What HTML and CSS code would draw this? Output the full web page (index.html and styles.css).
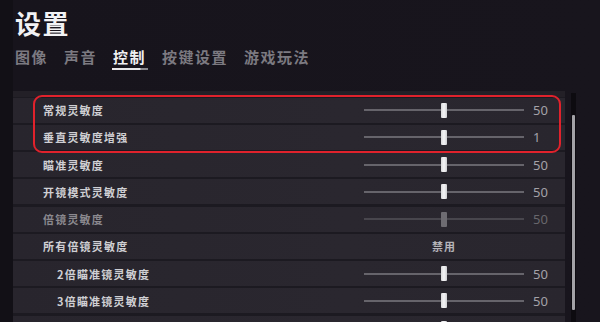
FILE: index.html
```html
<!DOCTYPE html>
<html lang="zh-CN">
<head>
<meta charset="utf-8">
<title>设置</title>
<link rel="stylesheet" href="styles.css">
</head>
<body>
<div class="screen">
  <header class="head">
    <h1 class="title">设置</h1>
    <nav class="tabs">
      <span class="tab">图像</span>
      <span class="tab">声音</span>
      <span class="tab active">控制</span>
      <span class="tab">按键设置</span>
      <span class="tab">游戏玩法</span>
    </nav>
  </header>
  <div class="content">
    <section class="panel">
      <div class="panel-top"></div>
      <div class="rows">
        <div class="row">
          <span class="label">常规灵敏度</span>
          <span class="slider"><span class="track"></span><span class="thumb"></span></span>
          <span class="value">50</span>
        </div>
        <div class="row">
          <span class="label">垂直灵敏度增强</span>
          <span class="slider"><span class="track"></span><span class="thumb"></span></span>
          <span class="value">1</span>
        </div>
        <div class="row">
          <span class="label">瞄准灵敏度</span>
          <span class="slider"><span class="track"></span><span class="thumb"></span></span>
          <span class="value">50</span>
        </div>
        <div class="row">
          <span class="label">开镜模式灵敏度</span>
          <span class="slider"><span class="track"></span><span class="thumb"></span></span>
          <span class="value">50</span>
        </div>
        <div class="row disabled">
          <span class="label">倍镜灵敏度</span>
          <span class="slider"><span class="track"></span><span class="thumb"></span></span>
          <span class="value">50</span>
        </div>
        <div class="row">
          <span class="label">所有倍镜灵敏度</span>
          <span class="slider option">禁用</span>
          <span class="value"></span>
        </div>
        <div class="row sub">
          <span class="label">2倍瞄准镜灵敏度</span>
          <span class="slider"><span class="track"></span><span class="thumb"></span></span>
          <span class="value">50</span>
        </div>
        <div class="row sub">
          <span class="label">3倍瞄准镜灵敏度</span>
          <span class="slider"><span class="track"></span><span class="thumb"></span></span>
          <span class="value">50</span>
        </div>
        <div class="row sub">
          <span class="label"></span>
          <span class="slider"><span class="track"></span><span class="thumb"></span></span>
          <span class="value"></span>
        </div>
        <div class="highlight"></div>
      </div>
    </section>
    <div class="scroll"><div class="scroll-thumb"></div></div>
  </div>
</div>
</body>
</html>
```

FILE: styles.css
```css
html, body {
  margin: 0;
  padding: 0;
}
body {
  width: 600px;
  height: 322px;
  overflow: hidden;
  background: #16131b;
  font-family: "Noto Sans CJK SC", "Noto Sans", sans-serif;
}
.screen {
  width: 600px;
  height: 322px;
  background: linear-gradient(90deg, #121016 0, #121016 13px, #17141c 13px, #18151d 100%);
}
.head {
  padding: 7px 0 0 15px;
}
.title {
  margin: 0;
  font-size: 26px;
  line-height: 31px;
  font-weight: 700;
  letter-spacing: 1.5px;
  color: #f2f2f4;
}
.tabs {
  display: flex;
  gap: 16px;
  margin-top: 9px;
}
.tab {
  position: relative;
  font-size: 15px;
  line-height: 20px;
  font-weight: 700;
  letter-spacing: 1.5px;
  color: #7c7a81;
}
.tab.active {
  color: #f0f0f2;
}
.tab.active::after {
  content: "";
  position: absolute;
  left: -1px;
  top: 21px;
  width: 36px;
  height: 2px;
  background: linear-gradient(90deg, #e8e8ea 0, #e8e8ea 78%, #8a898e 80%, #8a898e 100%);
}
.content {
  display: flex;
  margin-top: 24px;
}
.panel {
  margin-left: 13px;
  width: 552px;
  background: #1c1a21;
}
.panel-top {
  height: 6px;
  background: #232027;
}
.rows {
  position: relative;
  padding-top: 0.5px;
}
.row {
  display: flex;
  align-items: center;
  height: 25px;
  margin-bottom: 2.25px;
  padding-left: 30px;
  background: linear-gradient(90deg, #28252d 0, #2a272f 60%, #29262e 100%);
}
.row.sub {
  padding-left: 44px;
}
.label {
  flex: 1;
  font-size: 11px;
  font-weight: 700;
  letter-spacing: 1.2px;
  color: #cfcfd3;
}
.row.disabled .label {
  color: #8b898f;
}
.slider {
  position: relative;
  width: 160px;
  height: 25px;
  display: flex;
  align-items: center;
}
.track {
  width: 100%;
  height: 2px;
  background: #66646b;
}
.thumb {
  position: absolute;
  left: 77px;
  top: 5px;
  width: 6px;
  height: 15px;
  border-radius: 1px;
  background: linear-gradient(90deg, #d8d8da, #f4f4f6 50%, #cfcfd2);
}
.row.disabled .track {
  background: #48464d;
}
.row.disabled .thumb {
  background: #6e6c72;
}
.slider.option {
  justify-content: center;
  font-size: 11px;
  font-weight: 700;
  letter-spacing: 1px;
  color: #b5b4b9;
}
.value {
  width: 32px;
  margin-left: 9px;
  font-family: "Noto Sans", sans-serif;
  font-size: 13px;
  color: #a4a2a8;
}
.row.disabled .value {
  color: #68666c;
}
.highlight {
  position: absolute;
  left: 20px;
  top: -2.5px;
  width: 524px;
  height: 54px;
  border: 2px solid #e0222c;
  border-radius: 9px;
  pointer-events: none;
}
.scroll {
  margin-left: 6px;
  margin-top: 2px;
  width: 5px;
  height: 240px;
  background: #0d0b10;
  padding-top: 22px;
  box-sizing: border-box;
}
.scroll-thumb {
  margin-left: 1px;
  width: 3px;
  height: 195px;
  background: #a3a2a7;
  border-radius: 1px;
}
```
